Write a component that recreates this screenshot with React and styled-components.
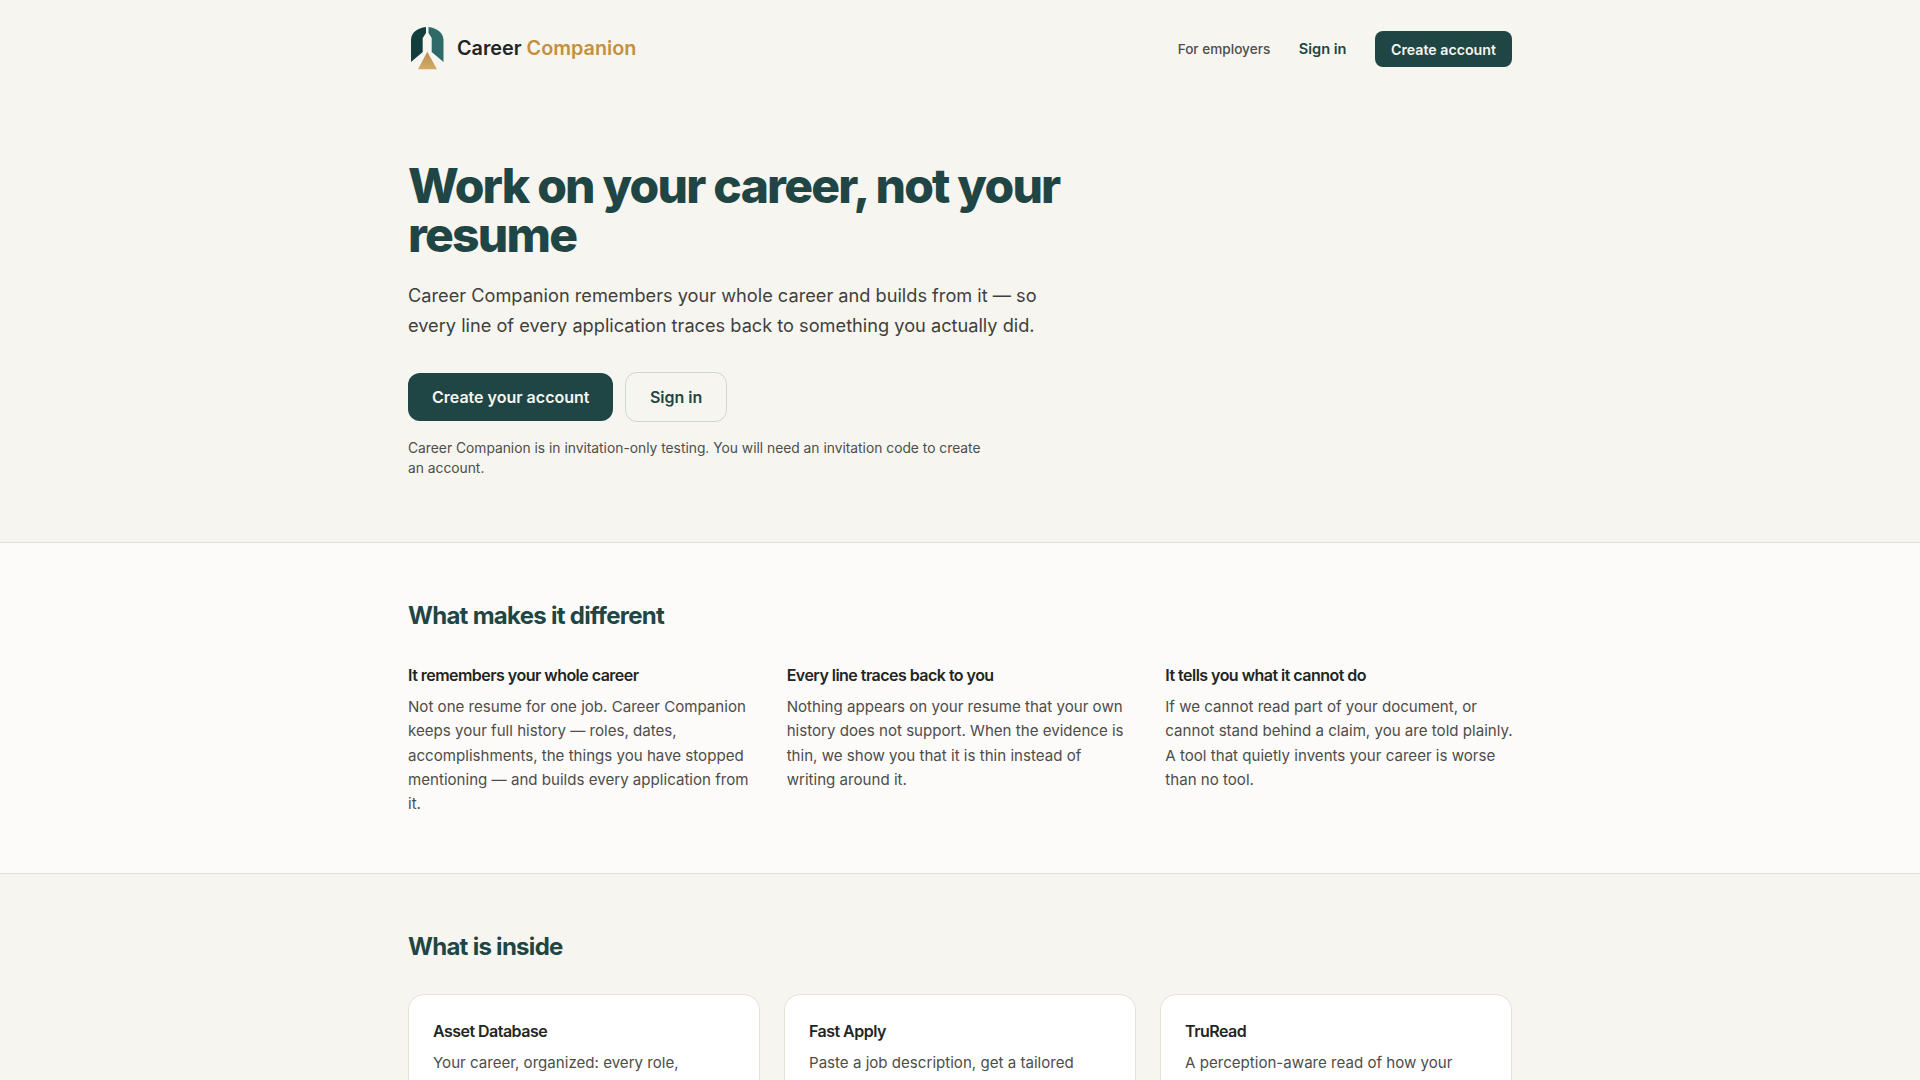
import React from 'react';
import styled, { createGlobalStyle } from 'styled-components';

const features = [
  {
    title: 'It remembers your whole career',
    body: 'Not one resume for one job. Career Companion keeps your full history — roles, dates, accomplishments, the things you have stopped mentioning — and builds every application from it.',
  },
  {
    title: 'Every line traces back to you',
    body: 'Nothing appears on your resume that your own history does not support. When the evidence is thin, we show you that it is thin instead of writing around it.',
  },
  {
    title: 'It tells you what it cannot do',
    body: 'If we cannot read part of your document, or cannot stand behind a claim, you are told plainly. A tool that quietly invents your career is worse than no tool.',
  },
];

const products = [
  { title: 'Asset Database', body: 'Your career, organized: every role,' },
  { title: 'Fast Apply', body: 'Paste a job description, get a tailored' },
  { title: 'TruRead', body: 'A perception-aware read of how your' },
];

const GlobalStyle = createGlobalStyle`
  html, body {
    margin: 0;
    background: #f7f5f0;
  }
  body {
    font-family: Inter, "Liberation Sans", sans-serif;
    color: #1f2a2a;
  }
  * {
    box-sizing: border-box;
  }
`;

const Container = styled.div`
  width: 1104px;
  margin: 0 auto;
`;

const Header = styled(Container)`
  display: flex;
  align-items: center;
  justify-content: space-between;
  height: 98px;
`;

const Brand = styled.a`
  display: flex;
  align-items: center;
  gap: 13px;
  font-size: 19.8px;
  line-height: 24px;
  font-weight: 600;
  color: #1f2624;
  margin-top: -2px;
`;

const BrandAccent = styled.span`
  color: #c2903f;
`;

const Nav = styled.nav`
  display: flex;
  align-items: center;
  gap: 28.5px;
`;

const NavLink = styled.a`
  font-size: ${(p) => (p.$strong ? '14.6px' : '13.6px')};
  font-weight: ${(p) => (p.$strong ? 600 : 500)};
  color: ${(p) => (p.$strong ? '#1f4644' : '#4d4d4a')};
`;

const NavButton = styled.a`
  display: flex;
  align-items: center;
  height: 36px;
  padding: 0 16px;
  border-radius: 8px;
  background: #1f4644;
  color: #f7f5f0;
  font-size: 14.2px;
  font-weight: 600;
`;

const Hero = styled(Container)`
  padding: 63px 0 64px;
`;

const Title = styled.h1`
  max-width: 680px;
  margin: 0;
  font-size: 48px;
  line-height: 49px;
  font-weight: 800;
  letter-spacing: -0.037em;
  color: #1f4644;
`;

const Lead = styled.p`
  max-width: 640px;
  margin: 21px 0 0;
  font-size: 18.2px;
  line-height: 30px;
  color: #3f3f3c;
`;

const Actions = styled.div`
  display: flex;
  align-items: center;
  gap: 12px;
  margin-top: 32px;
`;

const PrimaryButton = styled.a`
  display: flex;
  align-items: center;
  height: 48px;
  padding: 0 24px;
  border-radius: 12px;
  background: #1f4644;
  color: #f7f5f0;
  font-size: 16px;
  font-weight: 600;
`;

const SecondaryButton = styled.a`
  display: flex;
  align-items: center;
  height: 50px;
  padding: 0 23.5px;
  border: 1px solid #cfd8d0;
  border-radius: 12px;
  color: #1f4644;
  font-size: 16px;
  font-weight: 600;
`;

const Hint = styled.p`
  max-width: 580px;
  margin: 16px 0 0;
  font-size: 13.8px;
  line-height: 20px;
  color: #4d4d4a;
`;

const Section = styled.section`
  padding: 56px 0;
  border-top: 1px solid #e5e1d8;
  background: ${(p) => (p.$light ? '#fcfbf9' : '#f7f5f0')};
`;

const SectionTitle = styled.h2`
  margin: 0;
  font-size: 24px;
  line-height: 34px;
  font-weight: 700;
  letter-spacing: -0.03em;
  color: #1f4644;
`;

const FeatureGrid = styled.div`
  display: grid;
  grid-template-columns: 346.67px 346.67px 354px;
  gap: 32px;
  margin-top: 30px;
`;

const ItemTitle = styled.h3`
  margin: 0;
  font-size: 16px;
  line-height: 24px;
  font-weight: 600;
  letter-spacing: -0.033em;
  color: #1f2624;
`;

const ItemBody = styled.p`
  margin: 8px 0 0;
  font-size: 15.1px;
  line-height: 24.32px;
  color: #4d4d4a;
`;

const CardGrid = styled.div`
  display: grid;
  grid-template-columns: repeat(3, 1fr);
  gap: 24px;
  margin-top: 30px;
`;

const Card = styled.article`
  min-height: 180px;
  padding: 24px;
  border: 1px solid #e5e1d8;
  border-radius: 16px;
  background: #fff;
`;

const Logo = () => (
  <svg width="36" height="44" viewBox="0 0 36 44">
    <defs>
      <linearGradient id="gold" x1="0" y1="0" x2="0" y2="1">
        <stop offset="0" stopColor="#b98e52" />
        <stop offset="1" stopColor="#d3aa66" />
      </linearGradient>
    </defs>
    <path d="M3 36 V14 C3 7 9 2 18 1 V7 L14.7 12 V26 Z" fill="#123f3e" />
    <path d="M20.5 1 C29 2 35.5 7 35.5 14 V36 L23.7 26 V12 L20.5 7 Z" fill="#2e6a68" />
    <path d="M19.3 25.7 L29 43.3 H10 Z" fill="url(#gold)" />
  </svg>
);

export default function App() {
  return (
    <>
      <GlobalStyle />
      <Header as="header">
        <Brand>
          <Logo />
          <span>
            Career <BrandAccent>Companion</BrandAccent>
          </span>
        </Brand>
        <Nav>
          <NavLink>For employers</NavLink>
          <NavLink $strong>Sign in</NavLink>
          <NavButton>Create account</NavButton>
        </Nav>
      </Header>
      <Hero as="main">
        <Title>Work on your career, not your resume</Title>
        <Lead>
          Career Companion remembers your whole career and builds from it — so every line of every
          application traces back to something you actually did.
        </Lead>
        <Actions>
          <PrimaryButton>Create your account</PrimaryButton>
          <SecondaryButton>Sign in</SecondaryButton>
        </Actions>
        <Hint>
          Career Companion is in invitation-only testing. You will need an invitation code to create
          an account.
        </Hint>
      </Hero>
      <Section $light>
        <Container>
          <SectionTitle>What makes it different</SectionTitle>
          <FeatureGrid>
            {features.map((item) => (
              <div key={item.title}>
                <ItemTitle>{item.title}</ItemTitle>
                <ItemBody>{item.body}</ItemBody>
              </div>
            ))}
          </FeatureGrid>
        </Container>
      </Section>
      <Section>
        <Container>
          <SectionTitle>What is inside</SectionTitle>
          <CardGrid>
            {products.map((item) => (
              <Card key={item.title}>
                <ItemTitle>{item.title}</ItemTitle>
                <ItemBody>{item.body}</ItemBody>
              </Card>
            ))}
          </CardGrid>
        </Container>
      </Section>
    </>
  );
}
